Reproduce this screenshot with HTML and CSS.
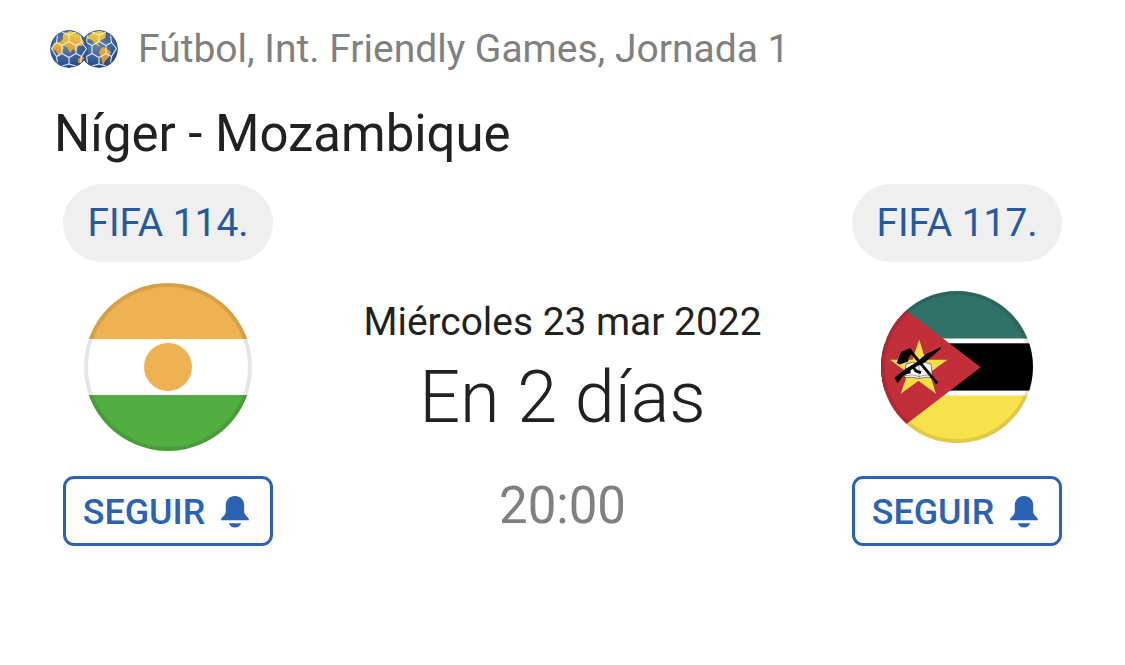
FILE: index.html
```html
<!DOCTYPE html>
<html lang="es">
<head>
    <meta charset="UTF-8">
    <meta name="viewport" content="width=device-width, initial-scale=1.0">
    <title>Níger - Mozambique</title>
    <link rel="stylesheet" href="styles.css">
</head>
<body>
    <div class="league">
        <svg class="balls" viewBox="0 0 68 40">
            <defs>
                <radialGradient id="sea" cx="0.45" cy="0.35" r="0.65">
                    <stop offset="0" stop-color="#6b86a8"/>
                    <stop offset="0.6" stop-color="#3c619c"/>
                    <stop offset="1" stop-color="#25488a"/>
                </radialGradient>
                <linearGradient id="land" x1="0" y1="0" x2="0" y2="1">
                    <stop offset="0" stop-color="#eccb3a"/>
                    <stop offset="1" stop-color="#d88a32"/>
                </linearGradient>
                <clipPath id="ball"><circle cx="19" cy="20" r="19"/></clipPath>
                <path id="seams" class="seams" d="M19 12.500l7 4v8l-7 4-7-4v-8zM19 12.500V6M26 16.500l5.500-3M26 24.500l5.500 3M19 28.500V35M12 24.500l-5.500 3M12 16.500l-5.500-3M19 6l-7-3M19 6l7-3M31.500 13.500l-1-7M31.500 13.500l5 6-5 8-1 6M19 35l-7 2M19 35l7 2M6.500 27.500l1 6M6.500 27.500l-5-8 5-6 1-7"/>
            </defs>
            <g transform="translate(30 0)" clip-path="url(#ball)">
                <circle cx="19" cy="20" r="19" fill="url(#sea)"/>
                <path fill="url(#land)" d="M8 7q5-5 13-5l5 3-1 4-5 3-2 3 3 3-5-2-4-5-4-1zM22 18l4 1 5 4-2 5-4 4-2 5-2-8-2-6z"/>
                <use href="#seams"/>
            </g>
            <g clip-path="url(#ball)">
                <circle cx="19" cy="20" r="19" fill="url(#sea)"/>
                <path fill="url(#land)" d="M13 5l7-3 9 3 5 8-2 4-4 0-2 6-3-3-3 4-3-6-5-1-2-4 3-3zM4 14l6-1 4 6-2 4-3 5-3-6-4-2zM28 30l4-3 2 2-3 5-3 0z"/>
                <use href="#seams"/>
            </g>
        </svg>
        <span>Fútbol, Int. Friendly Games, Jornada 1</span>
    </div>

    <h1>Níger - Mozambique</h1>

    <div class="match">
        <div class="team">
            <div class="rank">FIFA 114.</div>
            <div class="flag-box">
                <svg class="flag niger" viewBox="0 0 168 168">
                    <clipPath id="c1"><circle cx="84" cy="84" r="84"/></clipPath>
                    <g clip-path="url(#c1)">
                        <rect width="168" height="168" fill="#fff"/>
                        <rect width="168" height="56" fill="#efb253"/>
                        <rect y="112" width="168" height="56" fill="#51ae41"/>
                        <circle cx="84" cy="84" r="24" fill="#efb253"/>
                    </g>
                    <circle cx="84" cy="84" r="82" class="ring"/>
                </svg>
            </div>
            <button class="follow">SEGUIR
                <svg class="bell" viewBox="0 0 28 32"><path d="M14 0C8.500 0 4.800 4 4.800 9.300v6.200c0 4-4.800 5.500-4.800 8.700h28c0-3.200-4.800-4.700-4.800-8.700V9.300C23.200 4 19.500 0 14 0zM7.800 27.200c1 2.700 3.300 4.300 6.200 4.300s5.200-1.600 6.200-4.300z"/></svg>
            </button>
        </div>

        <div class="info">
            <div class="date">Miércoles 23 mar 2022</div>
            <div class="countdown">En 2 días</div>
            <div class="time">20:00</div>
        </div>

        <div class="team">
            <div class="rank">FIFA 117.</div>
            <div class="flag-box">
                <svg class="flag mozambique" viewBox="0 0 152 152">
                    <clipPath id="c2"><circle cx="76" cy="76" r="76"/></clipPath>
                    <g clip-path="url(#c2)">
                        <rect width="152" height="152" fill="#fff"/>
                        <rect width="152" height="47.500" fill="#307168"/>
                        <rect y="52.300" width="152" height="47.300" fill="#000"/>
                        <rect y="104.500" width="152" height="48" fill="#f8e24b"/>
                        <path d="M0 0l99.700 76.200L0 152.500z" fill="#c32e3b"/>
                        <path d="M38.200 48.500L55 102.700 9 68.700H66.500L19.700 102.700z" fill="#f9dc48"/>
                        <!-- book -->
                        <path d="M25 73q7-3 13 0 6-3 12 0l1.500 13.500q-7-1-13.500 1-7-2-14.500-1z" fill="#fff" stroke="#333" stroke-width="0.6"/>
                        <path d="M38 73v14M24 84.500q8-1.500 14 1 7-2.500 13-1" fill="none" stroke="#555" stroke-width="0.6"/>
                        <!-- hoe -->
                        <path d="M28.500 59L56.300 92.300" stroke="#000" stroke-width="2.800"/>
                        <path d="M29.500 57l-9.500 4-4.300 11 3 1.500 8.500-3 .5-4 4.300-5z"/>
                        <!-- rifle -->
                        <path d="M13.500 86.800l11-8.800 12-7.500 8-7 15.500-7.500-.5 2-14.500 12.500-8.500 4.500-6.500 4-2.500 3.500-5 2-6 8z"/>
                        <path d="M32.500 75.500q.5 5 7.500 6M27.500 78.500l1 4" fill="none" stroke="#000" stroke-width="2.800"/>
                    </g>
                    <circle cx="76" cy="76" r="74.200" class="ring"/>
                </svg>
            </div>
            <button class="follow">SEGUIR
                <svg class="bell" viewBox="0 0 28 32"><path d="M14 0C8.500 0 4.800 4 4.800 9.300v6.200c0 4-4.800 5.500-4.800 8.700h28c0-3.200-4.800-4.700-4.800-8.700V9.300C23.200 4 19.500 0 14 0zM7.800 27.200c1 2.700 3.300 4.300 6.200 4.300s5.200-1.600 6.200-4.300z"/></svg>
            </button>
        </div>
    </div>
</body>
</html>
```
FILE: styles.css
```css
* { box-sizing: border-box; }
body {
    margin: 0; padding: 26px 63px 0; background: #fff;
    font-family: Roboto, sans-serif; color: #212121;
}
.league {
    display: flex; align-items: center; gap: 20px;
    height: 46px; margin-left: -13px;
    font-size: 39px; line-height: 46px; color: #808080; white-space: nowrap;
}
.balls { width: 68px; height: 40px; flex: none; }
.seams { fill: none; stroke: #e8edf0; stroke-width: 1.1; }
h1 {
    margin: 32px 0 0 -9px; font-size: 50.9px; line-height: 60px;
    font-weight: 400; white-space: nowrap;
}
.match { display: flex; justify-content: space-between; margin-top: 20px; }
.team { width: 210px; display: flex; flex-direction: column; align-items: center; }
.rank {
    width: 210px; height: 78px; border-radius: 39px; background: #efefef;
    color: #2659a0; font-size: 38.9px; line-height: 78px; text-align: center;
}
.flag-box { height: 168px; margin-top: 21px; display: flex; align-items: center; }
.flag { display: block; }
.niger { width: 168px; height: 168px; }
.mozambique { width: 152px; height: 152px; }
.ring { fill: none; stroke: #000; stroke-opacity: 0.1; stroke-width: 4; }
.follow {
    width: 210px; height: 70px; margin-top: 25px; padding: 2px 4px 0 0;
    display: flex; align-items: center; justify-content: center; gap: 16px;
    border: 3px solid #2b62b4; border-radius: 11px; background: #fff;
    color: #2b62b4; font-family: inherit; font-size: 35.8px; font-weight: 500;
}
.bell { width: 28px; height: 32px; fill: #2b62b4; }
.info { padding-top: 115px; text-align: center; white-space: nowrap; }
.date { font-size: 38.9px; line-height: 46px; }
.countdown { margin-top: 11px; font-size: 72px; line-height: 84px; font-weight: 300; }
.time { margin-top: 36px; font-size: 51px; line-height: 60px; color: #808080; }
```
